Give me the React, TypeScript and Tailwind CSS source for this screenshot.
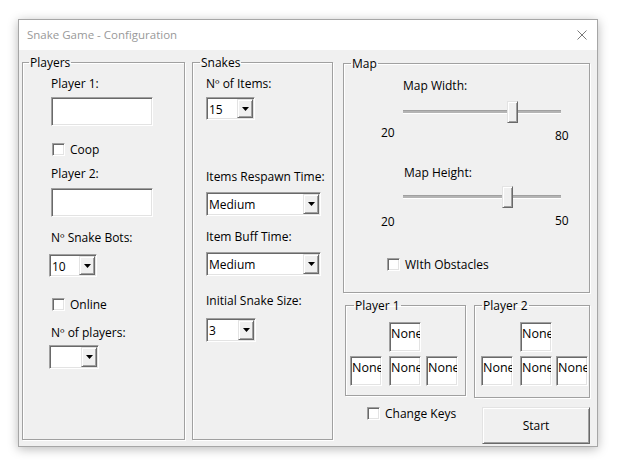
import React from 'react';

const sunken =
  'border border-t-[#a0a0a0] border-l-[#a0a0a0] border-b-white border-r-white bg-white shadow-[inset_1px_1px_0_#696969,inset_-1px_-1px_0_#e3e3e3]';
const raised =
  'border border-t-[#e3e3e3] border-l-[#e3e3e3] border-b-[#696969] border-r-[#696969] bg-[#f0f0f0] shadow-[inset_1px_1px_0_#fff,inset_-1px_-1px_0_#a0a0a0]';
const etched =
  'border border-[#a0a0a0] shadow-[inset_1px_1px_0_#fff,1px_1px_0_#fff]';

function TextBox({ className }: { className: string }) {
  return <div className={`${sunken} ${className}`} />;
}

function Check({ label, className }: { label: string; className: string }) {
  return (
    <div className={`flex h-[15px] items-center gap-[5px] ${className}`}>
      <div className={`h-[13px] w-[13px] ${sunken}`} />
      <span className="leading-[15px]">{label}</span>
    </div>
  );
}

function Combo({ value, className }: { value: string; className: string }) {
  return (
    <div className={`flex p-[1px] ${sunken} ${className}`}>
      <span className="flex flex-1 items-center overflow-hidden pl-[1px] pt-[1px] leading-[15px]">{value}</span>
      <div className={`flex w-[16px] items-center justify-center ${raised}`}>
        <svg width="7" height="4" viewBox="0 0 7 4" aria-hidden="true">
          <polygon points="0,0 7,0 3.5,4" fill="#000" />
        </svg>
      </div>
    </div>
  );
}

function Slider({ thumb, className }: { thumb: string; className: string }) {
  return (
    <div className={`relative h-[22px] w-[158px] ${className}`}>
      <div className="absolute left-0 right-0 top-[9px] h-[4px] border-t border-b border-t-[#a0a0a0] border-b-white bg-[#b4b4b4]" />
      <div className={`absolute top-0 h-[22px] w-[11px] ${raised} ${thumb}`} />
    </div>
  );
}

function Key({ className }: { className: string }) {
  return (
    <div className={`h-[30px] w-[32px] overflow-hidden whitespace-nowrap pl-[1px] pt-[3px] text-[12.5px] leading-[15px] ${sunken} ${className}`}>
      None
    </div>
  );
}

function Group({
  title,
  legend,
  className,
  children,
}: {
  title: string;
  legend: string;
  className: string;
  children: React.ReactNode;
}) {
  return (
    <fieldset className={`${etched} ${className}`}>
      <legend className={`px-[1px] leading-[15px] ${legend}`}>{title}</legend>
      {children}
    </fieldset>
  );
}

export default function App() {
  return (
    <div className="h-[467px] w-[626px] bg-white pl-[18px] pt-[19px] font-['Open_Sans',sans-serif] text-[12px] text-black">
      <div className="flex h-[428px] w-[580px] flex-col border border-[#a6a6a6] bg-[#f0f0f0] shadow-[0_2px_10px_rgba(0,0,0,0.28)]">
        <header className="flex h-[30px] items-center justify-between bg-white pl-[8px] pr-[10px]">
          <span className="text-[11.5px] text-[#999]">Snake Game - Configuration</span>
          <svg width="10" height="10" viewBox="0 0 10 10" aria-hidden="true">
            <path d="M0.5 0.5 L9.5 9.5 M9.5 0.5 L0.5 9.5" stroke="#7a7a7a" strokeWidth="1" />
          </svg>
        </header>

        <div className="flex flex-1 items-start pl-[3px] whitespace-nowrap">
          <Group title="Players" legend="ml-[6px]" className="mt-[5px] h-[385px] w-[163px]">
            <div className="flex flex-col items-start pl-[28px]">
              <span className="mt-[6px] leading-[15px]">Player 1:</span>
              <TextBox className="mt-[6px] h-[29px] w-[102px]" />
              <Check label="Coop" className="ml-[1px] mt-[16px]" />
              <span className="mt-[9px] leading-[15px]">Player 2:</span>
              <TextBox className="mt-[7px] h-[29px] w-[102px]" />
              <span className="mt-[13px] leading-[15px]">Nº Snake Bots:</span>
              <Combo value="10" className="-ml-[2px] mt-[9px] h-[23px] w-[48px]" />
              <Check label="Online" className="ml-[1px] mt-[20px]" />
              <span className="mt-[13px] leading-[15px]">Nº of players:</span>
              <Combo value="" className="-ml-[2px] mt-[5px] h-[24px] w-[50px]" />
            </div>
          </Group>

          <Group title="Snakes" legend="ml-[7px]" className="ml-[7px] mt-[5px] h-[385px] w-[141px]">
            <div className="flex flex-col items-start pl-[13px]">
              <span className="mt-[6px] leading-[15px]">Nº of Items:</span>
              <Combo value="15" className="mt-[6px] h-[23px] w-[49px]" />
              <span className="mt-[49px] leading-[15px]">Items Respawn Time:</span>
              <Combo value="Medium" className="mt-[8px] h-[24px] w-[115px]" />
              <span className="mt-[13px] leading-[15px]">Item Buff Time:</span>
              <Combo value="Medium" className="mt-[8px] h-[24px] w-[115px]" />
              <span className="mt-[17px] leading-[15px]">Initial Snake Size:</span>
              <Combo value="3" className="mt-[10px] h-[24px] w-[50px]" />
            </div>
          </Group>

          <div className="ml-[10px] flex w-[247px] flex-col">
            <Group title="Map" legend="ml-[7px]" className="mt-[6px] h-[237px] w-[247px]">
              <div className="flex flex-col items-start">
                <span className="ml-[59px] mt-[7px] leading-[15px]">Map Width:</span>
                <Slider thumb="left-[104px]" className="ml-[59px] mt-[8px]" />
                <div className="mt-[2px] flex h-[18px] items-start leading-[15px]">
                  <span className="ml-[37px] w-[174px]">20</span>
                  <span className="mt-[3px]">80</span>
                </div>
                <span className="ml-[60px] mt-[22px] leading-[15px]">Map Height:</span>
                <Slider thumb="left-[99px]" className="ml-[59px] mt-[6px]" />
                <div className="mt-[5px] flex h-[16px] items-start leading-[15px]">
                  <span className="ml-[37px] mt-[1px] w-[174px]">20</span>
                  <span>50</span>
                </div>
                <Check label="WIth Obstacles" className="ml-[43px] mt-[28px]" />
              </div>
            </Group>

            <div className="mt-[5px] flex items-start">
              <Group title="Player 1" legend="ml-[8px]" className="ml-[2px] h-[98px] w-[121px]">
                <div className="flex flex-col items-start">
                  <Key className="ml-[43px] mt-[9px]" />
                  <div className="mt-[4px] flex">
                    <Key className="ml-[4px]" />
                    <Key className="ml-[7px]" />
                    <Key className="ml-[5px]" />
                  </div>
                </div>
              </Group>
              <Group title="Player 2" legend="ml-[7px]" className="ml-[8px] h-[100px] w-[116px]">
                <div className="flex flex-col items-start">
                  <Key className="ml-[45px] mt-[9px]" />
                  <div className="mt-[4px] flex">
                    <Key className="ml-[6px]" />
                    <Key className="ml-[7px]" />
                    <Key className="ml-[4px]" />
                  </div>
                </div>
              </Group>
            </div>

            <div className="mt-[8px] flex items-start">
              <Check label="Change Keys" className="ml-[24px] gap-[4px]" />
              <button
                type="button"
                className={`ml-auto mt-[1px] flex h-[37px] w-[108px] items-center justify-center leading-[15px] ${raised}`}
              >
                Start
              </button>
            </div>
          </div>
        </div>
      </div>
    </div>
  );
}
